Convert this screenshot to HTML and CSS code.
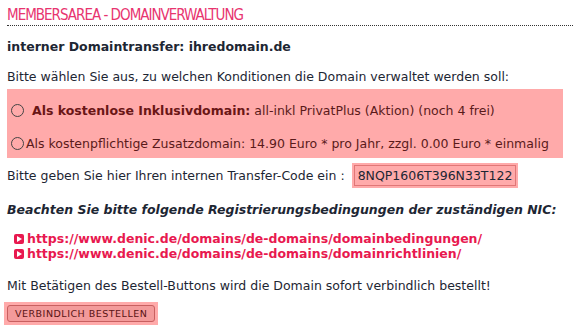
FILE: index.html
```html
<!DOCTYPE html>
<html lang="de">
<head>
    <meta charset="UTF-8">
    <title>Membersarea - Domainverwaltung</title>
    <link rel="stylesheet" href="styles.css">
</head>
<body>
    <h1 class="title">MEMBERSAREA - DOMAINVERWALTUNG</h1>

    <p class="headline">interner Domaintransfer: ihredomain.de</p>

    <p>Bitte wählen Sie aus, zu welchen Konditionen die Domain verwaltet werden soll:</p>

    <div class="options">
        <label class="option">
            <span class="radio"></span>
            <span><strong>Als kostenlose Inklusivdomain:</strong> all-inkl PrivatPlus (Aktion) (noch 4 frei)</span>
        </label>
        <label class="option tight">
            <span class="radio"></span>
            <span>Als kostenpflichtige Zusatzdomain: 14.90 Euro * pro Jahr, zzgl. 0.00 Euro * einmalig</span>
        </label>
    </div>

    <p class="code-row">Bitte geben Sie hier Ihren internen Transfer-Code ein : <span class="code">8NQP1606T396N33T122</span></p>

    <p class="notice">Beachten Sie bitte folgende Registrierungsbedingungen der zuständigen NIC:</p>

    <ul class="links">
        <li><span class="arrow"></span><a href="#">https://www.denic.de/domains/de-domains/domainbedingungen/</a></li>
        <li><span class="arrow"></span><a href="#">https://www.denic.de/domains/de-domains/domainrichtlinien/</a></li>
    </ul>

    <p>Mit Betätigen des Bestell-Buttons wird die Domain sofort verbindlich bestellt!</p>

    <div class="order">
        <button>VERBINDLICH BESTELLEN</button>
    </div>
</body>
</html>
```

FILE: styles.css
```css
body {
    margin: 0;
    padding: 0 7px;
    font-family: "DejaVu Sans", Verdana, sans-serif;
    font-size: 12.5px;
    color: #1d2633;
    background: #fff;
}

p {
    margin: 0;
}

/* Page title */
.title {
    margin: 0 -7px 0 0;
    padding-top: 7px;
    height: 18px;
    font-family: "DejaVu Sans Condensed", "DejaVu Sans", sans-serif;
    font-weight: normal;
    font-size: 15px;
    line-height: 16px;
    letter-spacing: -1px;
    color: #e8346f;
    border-bottom: 1px dotted #333;
}

.headline {
    margin-top: 13px;
    font-weight: bold;
}

.headline + p {
    margin-top: 15px;
}

/* Pink options box */
.options {
    margin-top: 5px;
    background-color: #ffaaaa;
    padding: 10px 0 4px 4px;
    width: 552px;
    color: #5a1a1a;
}

.option {
    display: flex;
    align-items: center;
    gap: 8px;
    height: 22px;
    margin-bottom: 11px;
}

.option.tight {
    gap: 2px;
    margin-bottom: 0;
}

.option strong {
    color: #6a1616;
}

.radio {
    width: 11px;
    height: 11px;
    border: 1px solid #444;
    border-radius: 50%;
    flex: none;
}

/* Transfer code */
.code-row {
    margin-top: 7px;
    display: flex;
    align-items: center;
    gap: 4px;
}

.code {
    background-color: #ffaaaa;
    border: 1px solid #e07777;
    outline: 2px solid #ffaaaa;
    padding: 2px 3px;
    margin-left: 5px;
    color: #1d2633;
}

.notice {
    margin-top: 16px;
    font-weight: bold;
    font-style: italic;
}

/* NIC links */
.links {
    list-style: none;
    margin: 14px 0 0 0;
    padding: 0 0 0 7px;
}

.links li {
    display: flex;
    align-items: center;
    gap: 3px;
    line-height: 15px;
}

.links a {
    color: #e8194f;
    font-weight: bold;
    text-decoration: none;
}

.arrow {
    width: 10px;
    height: 10px;
    border-radius: 2px;
    background-color: #e8194f;
    position: relative;
}

.arrow:before {
    content: '';
    position: absolute;
    top: 2px;
    left: 3px;
    border-left: 5px solid #fff;
    border-top: 3px solid transparent;
    border-bottom: 3px solid transparent;
}

.links + p {
    margin-top: 17px;
}

/* Order button */
.order {
    display: inline-block;
    margin: 9px 0 0 -3px;
    padding: 3px;
    background-color: #ffaaaa;
}

.order button {
    display: block;
    font-family: "DejaVu Sans", Verdana, sans-serif;
    font-size: 9.5px;
    letter-spacing: 0.5px;
    color: #5a1414;
    background-color: #f39a9a;
    border: 1px solid #c86060;
    border-radius: 3px;
    padding: 2px 7px;
    cursor: pointer;
}
```
